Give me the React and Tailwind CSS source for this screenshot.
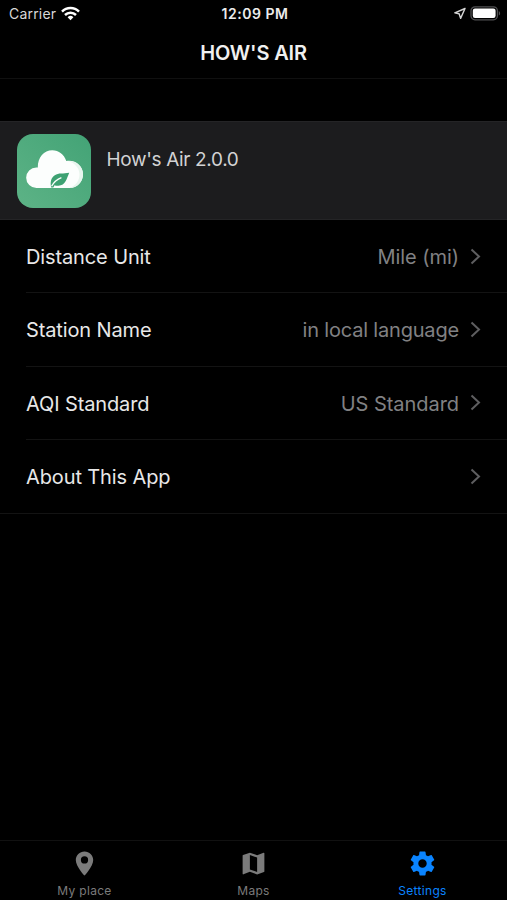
import React from 'react';

const rows = [
  { label: 'Distance Unit', value: 'Mile (mi)' },
  { label: 'Station Name', value: 'in local language' },
  { label: 'AQI Standard', value: 'US Standard' },
  { label: 'About This App', value: '' },
];

const tabs = [
  {
    label: 'My place',
    path: 'M12 2C8 2 4.800 5.130 4.800 9c0 5.250 7.200 13 7.200 13s7.200-7.750 7.200-13c0-3.870-3.200-7-7.200-7zm0 10a3 3 0 1 1 0-6 3 3 0 0 1 0 6z',
  },
  {
    label: 'Maps',
    path: 'M20.500 3l-.16.03L15 5.100 9 3 3.360 4.900c-.21.07-.36.25-.36.48V20.500c0 .28.22.5.5.5l.16-.03L9 18.900l6 2.100 5.640-1.900c.21-.07.36-.25.36-.48V3.500c0-.28-.22-.5-.5-.5zM15 19l-6-2.110V5l6 2.110V19z',
  },
  {
    label: 'Settings',
    active: true,
    path: 'M19.430 12.980c.04-.32.07-.64.07-.98s-.03-.66-.07-.98l2.110-1.650c.19-.15.24-.42.12-.64l-2-3.460c-.12-.22-.39-.3-.61-.22l-2.490 1c-.52-.4-1.080-.73-1.690-.98l-.38-2.650C14.460 2.180 14.250 2 14 2h-4c-.25 0-.46.18-.49.42l-.38 2.650c-.61.25-1.170.59-1.690.98l-2.490-1c-.23-.09-.49 0-.61.22l-2 3.460c-.13.22-.07.49.12.64l2.110 1.650c-.04.32-.07.65-.07.98s.03.66.07.98l-2.110 1.650c-.19.15-.24.42-.12.64l2 3.460c.12.22.39.3.61.22l2.490-1c.52.4 1.080.73 1.690.98l.38 2.650c.03.24.24.42.49.42h4c.25 0 .46-.18.49-.42l.38-2.650c.61-.25 1.170-.59 1.690-.98l2.490 1c.23.09.49 0 .61-.22l2-3.460c.12-.22.07-.49-.12-.64l-2.110-1.650zM12 15.500c-1.930 0-3.500-1.570-3.500-3.500s1.570-3.500 3.500-3.500 3.500 1.570 3.500 3.500-1.570 3.500-3.500 3.500z',
  },
];

const StatusBar = () => (
  <div className="h-[27px] shrink-0 grid grid-cols-3 items-center pl-[9px] pr-[6px] text-[14px] text-[#d8d8d8]">
    <div className="flex items-center gap-[5px]">
      <span className="tracking-[0.2px]">Carrier</span>
      <svg width="19" height="15" viewBox="0 0 19 15" fill="none" stroke="#fff" strokeWidth="2.5">
        <path d="M1 5.600a12 12 0 0 1 17 0" />
        <path d="M4 9a7.800 7.800 0 0 1 11 0" />
        <path d="M9.500 14.200 6.600 11.300a4.100 4.100 0 0 1 5.800 0z" fill="#fff" stroke="none" />
      </svg>
    </div>
    <span className="text-center font-semibold text-[#ececec] whitespace-nowrap tracking-[0.5px]">12:09 PM</span>
    <div className="flex items-center justify-end gap-[4px]">
      <svg width="13" height="13" viewBox="0 0 13 13" fill="none" stroke="#d4d4d4" strokeWidth="1.400" strokeLinejoin="round">
        <path d="M12 1.500 1.800 5.800l4.300.900 1.500 4.700z" />
      </svg>
      <svg width="31" height="15" viewBox="0 0 31 15">
        <rect x="1" y="0.800" width="26.400" height="13" rx="4" fill="none" stroke="#505052" strokeWidth="1.300" />
        <rect x="2.800" y="2.600" width="22.800" height="9.400" rx="2.200" fill="#fff" />
        <path d="M28.800 5c1.800.800 1.800 3.800 0 4.600z" fill="#505052" />
      </svg>
    </div>
  </div>
);

// White cloud with a leaf cut into its base
const AppLogo = () => (
  <svg width="74" height="74" viewBox="0 0 74 74" className="shrink-0">
    <defs>
      <linearGradient id="tile" x1="0" y1="1" x2="1" y2="0">
        <stop offset="0" stopColor="#5db386" />
        <stop offset="1" stopColor="#43a376" />
      </linearGradient>
    </defs>
    <rect width="74" height="74" rx="16" fill="url(#tile)" />
    <path
      d="M19.500 54a10.300 10.300 0 0 1-.100-20.600H20.800C20.700 23.500 27 16.300 35.300 16.300c6.500 0 11.800 4.200 14 10.700 9-1.700 16.700 5 16.700 13.200C66 48 60 54 52.500 54z"
      fill="#fcfefd"
    />
    <path d="M51 27c8.500-.500 15 5.700 15 13.200C66 48 60 54 52.500 54c6.500-2.200 10-7.400 10-13.400 0-6.400-4.500-11.600-11.500-13.600z" fill="#e8f5ee" />
    <path d="M34.200 53.600c-1.200-5.600-.200-9.800 3.600-12.400 3.800-2.500 8.400-1.200 14.400-2.400-2.400 5.600-3.600 12.700-10.800 13-1.400.100-2.800-.100-3.900-.500l-1.200 2.300z" fill="#3ea273" />
    <path d="M34.600 52.300c2.400-4.500 5.600-7.100 9.800-8.700" fill="none" stroke="#fcfefd" strokeWidth="1.300" />
  </svg>
);

const Chevron = () => (
  <svg width="11" height="17" viewBox="0 0 11 17" fill="none" stroke="#5e5e60" strokeWidth="2">
    <path d="M1.500 1.500 9 8.500 1.500 15.500" />
  </svg>
);

const App = () => {
  return (
    <div className="w-full h-screen bg-black text-white flex flex-col overflow-hidden font-[Inter,'Liberation_Sans',sans-serif]">
      <StatusBar />

      <header className="h-[52px] shrink-0 flex items-center justify-center border-b border-[#101010]">
        <h1 className="text-[20px] font-semibold text-[#f0f0f0] tracking-[-0.15px]">HOW'S AIR</h1>
      </header>

      <main className="flex-1 pt-[42px]">
        <section className="h-[99px] bg-[#1c1c1e] border-y border-[#242426] flex gap-4 pl-[16.500px] pt-3">
          <AppLogo />
          <span className="pt-3 text-[19px] leading-7 tracking-[-0.35px] text-[#d2d2d3]">How's Air 2.0.0</span>
        </section>

        <ul className="border-b border-[#131313]">
          {rows.map((row, i) => (
            <li key={row.label} className="pl-[26px]">
              <div
                className={`h-[73.250px] flex items-center pr-[26px] text-[20px] tracking-[-0.12px] ${
                  i < rows.length - 1 ? 'border-b border-[#131313]' : ''
                }`}
              >
                <span className="flex-1 pt-[2px] text-[#e8e8e8]">{row.label}</span>
                <span className={`mr-[11px] pt-[2px] text-[#818183] ${row.value.length > 12 ? 'tracking-[-0.18px]' : 'tracking-[-0.05px]'}`}>
                  {row.value}
                </span>
                <Chevron />
              </div>
            </li>
          ))}
        </ul>
      </main>

      <nav className="h-[60px] shrink-0 grid grid-cols-3 border-t border-[#111]">
        {tabs.map(({ label, path, active }) => (
          <div key={label} className={`flex flex-col items-center pt-2 ${active ? 'text-[#0a84ff]' : 'text-[#7b7b7b]'}`}>
            <svg width="29" height="29" viewBox="0 0 24 24" fill="currentColor">
              <path d={path} />
            </svg>
            <span className="mt-[5px] text-[12px] leading-4 tracking-[0.3px]">{label}</span>
          </div>
        ))}
      </nav>
    </div>
  );
};

export default App;
